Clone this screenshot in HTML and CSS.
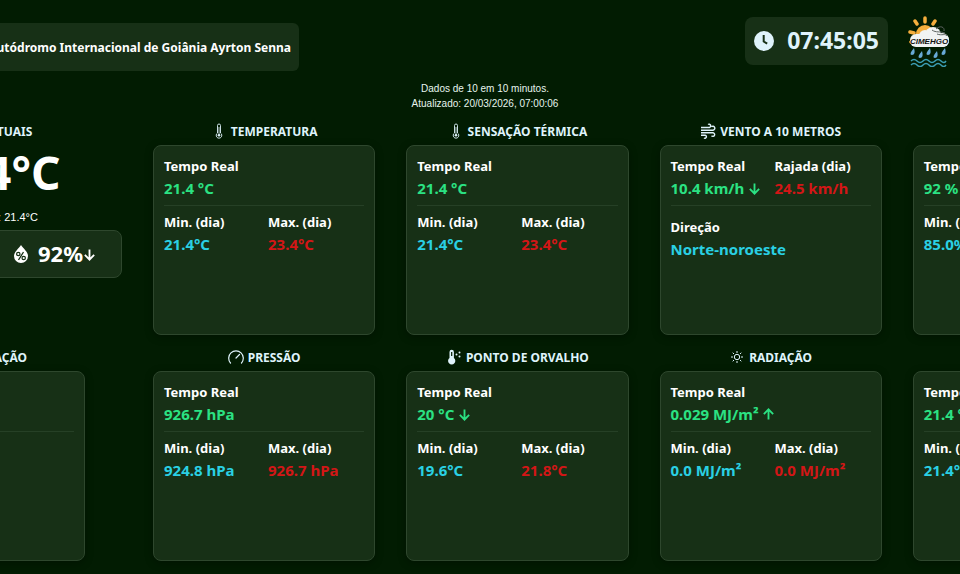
FILE: index.html
```html
<!DOCTYPE html>
<html lang="pt-BR">
<head>
    <meta charset="UTF-8">
    <meta name="viewport" content="width=device-width, initial-scale=1.0">
    <title>CIMEHGO - Autódromo Internacional de Goiânia</title>
    <link rel="stylesheet" href="styles.css">
</head>
<body>
    <!-- Shared icons -->
    <svg class="sprite" aria-hidden="true">
        <symbol id="icon-thermometer" viewBox="0 0 16 16">
            <path d="M6.500 10V2.500a1.500 1.500 0 0 1 3 0V10a2.800 2.800 0 1 1-3 0z" fill="none" stroke="currentColor" stroke-width="0.900"/>
            <path d="M8 4v8" stroke="currentColor" stroke-width="0.800"/>
            <circle cx="8" cy="12.300" r="1.300" fill="currentColor"/>
        </symbol>
        <symbol id="icon-down" viewBox="0 0 14 14">
            <path d="M7 1.500v11M2 7.500l5 5 5-5" fill="none" stroke="currentColor" stroke-width="2"/>
        </symbol>
        <symbol id="icon-up" viewBox="0 0 14 14">
            <path d="M7 12.500v-11M2 6.500l5-5 5 5" fill="none" stroke="currentColor" stroke-width="2"/>
        </symbol>
    </svg>

    <header class="header">
        <div class="station"><span>Autódromo Internacional de Goiânia Ayrton Senna</span></div>
        <div class="header-right">
            <div class="clock">
                <svg class="clock-icon" viewBox="0 0 20 20" aria-hidden="true">
                    <circle cx="10" cy="10" r="10" fill="currentColor"/>
                    <path d="M9.700 4v6.500l3.500 2.200" fill="none" stroke="#173016" stroke-width="2"/>
                </svg>
                <time>07:45:05</time>
            </div>
            <svg class="logo" viewBox="0 0 42 52" role="img" aria-label="CIMEHGO">
                <g stroke="#f5ae3d" stroke-width="3.500" stroke-linecap="round">
                    <path d="M17 3v4M7 6l2 3M27 6l-2 3M2 17l4 1M3 27l2-1"/>
                </g>
                <circle cx="17" cy="19" r="9" fill="#f5ae3d"/>
                <g fill="#f1f3f3">
                    <circle cx="17" cy="21" r="6"/>
                    <circle cx="25" cy="20" r="8"/>
                    <circle cx="34" cy="25" r="7"/>
                    <rect x="2" y="19" width="39" height="13" rx="6"/>
                </g>
                <path d="M24 15c4 3 8 1 13 3M28 14c4-4 9-2 8 2M29 19c5 2 8-1 10 2" fill="none" stroke="#5c6260"/>
                <text class="logo-text" x="21" y="29" text-anchor="middle">CIMEHGO</text>
                <path d="M6 33q-6 7-2 7t2-7zM14 36q-6 7-2 7t2-7zM22 33q-6 7-2 7t2-7zM29 36q-6 7-2 7t2-7zM37 33q-6 7-2 7t2-7z" fill="#68a9d6"/>
                <path d="M3 46q3-3 6 0t6 0 6 0 6 0 6 0 5 0M3 50q3-3 6 0t6 0 6 0 6 0 6 0 5 0" fill="none" stroke="#3c9db4" stroke-width="1.500"/>
            </svg>
        </div>
    </header>

    <p class="updated">Dados de 10 em 10 minutos.<br>Atualizado: 20/03/2026, 07:00:06</p>

    <main class="dashboard">
        <section class="current">
            <h2 class="title">CONDIÇÕES ATUAIS</h2>
            <div class="current-temp">
                <svg class="icon" aria-hidden="true"><use href="#icon-thermometer"/></svg>
                <span>21.4°C</span>
            </div>
            <p class="feels">Sensação térmica: 21.4°C</p>
            <div class="humidity">
                <svg class="drop" viewBox="0 0 14 18" aria-hidden="true">
                    <path d="M7 0c2 3 7 7 7 11a7 7 0 0 1-14 0c0-4 5-8 7-11z" fill="currentColor"/>
                    <path d="M9.500 7l-5 8" stroke="#173016" stroke-width="1.300"/>
                    <circle cx="4.300" cy="9" r="1.700" fill="none" stroke="#173016" stroke-width="1.200"/>
                    <circle cx="9.700" cy="13" r="1.700" fill="none" stroke="#173016" stroke-width="1.200"/>
                </svg>
                <span class="humidity-value">92%</span>
                <svg class="arrow" aria-label="caindo"><use href="#icon-down"/></svg>
            </div>
        </section>

        <section class="panel">
            <h2 class="title"><svg class="icon" aria-hidden="true"><use href="#icon-thermometer"/></svg>TEMPERATURA</h2>
            <div class="card">
                <dl class="row">
                    <div><dt>Tempo Real</dt><dd class="now">21.4 °C</dd></div>
                </dl>
                <dl class="row">
                    <div><dt>Min. (dia)</dt><dd class="min">21.4°C</dd></div>
                    <div><dt>Max. (dia)</dt><dd class="max">23.4°C</dd></div>
                </dl>
            </div>
        </section>

        <section class="panel">
            <h2 class="title"><svg class="icon" aria-hidden="true"><use href="#icon-thermometer"/></svg>SENSAÇÃO TÉRMICA</h2>
            <div class="card">
                <dl class="row">
                    <div><dt>Tempo Real</dt><dd class="now">21.4 °C</dd></div>
                </dl>
                <dl class="row">
                    <div><dt>Min. (dia)</dt><dd class="min">21.4°C</dd></div>
                    <div><dt>Max. (dia)</dt><dd class="max">23.4°C</dd></div>
                </dl>
            </div>
        </section>

        <section class="panel">
            <h2 class="title">
                <svg class="icon" viewBox="0 0 16 16" aria-hidden="true">
                    <path d="M1 4.500h8.500a1.700 1.700 0 1 0-1.500-3M1 7.200h12a2 2 0 1 0-1.500-3.500M1 9.800h12a1.800 1.800 0 1 1-1.500 3M1 12.300h4a1.500 1.500 0 1 1-1 2.700" fill="none" stroke="currentColor" stroke-width="1.400"/>
                </svg>VENTO A 10 METROS
            </h2>
            <div class="card">
                <dl class="row">
                    <div><dt>Tempo Real</dt><dd class="now">10.4 km/h <svg class="arrow" aria-label="caindo"><use href="#icon-down"/></svg></dd></div>
                    <div><dt>Rajada (dia)</dt><dd class="max">24.5 km/h</dd></div>
                </dl>
                <dl class="row row-wind">
                    <div><dt>Direção</dt><dd class="min">Norte-noroeste</dd></div>
                </dl>
            </div>
        </section>

        <section class="panel">
            <h2 class="title">UMIDADE</h2>
            <div class="card">
                <dl class="row">
                    <div><dt>Tempo Real</dt><dd class="now">92 %</dd></div>
                </dl>
                <dl class="row">
                    <div><dt>Min. (dia)</dt><dd class="min">85.0%</dd></div>
                    <div><dt>Max. (dia)</dt><dd class="max">92.0%</dd></div>
                </dl>
            </div>
        </section>

        <section class="panel panel-side">
            <h2 class="title">
                <svg class="icon" viewBox="0 0 16 16" aria-hidden="true">
                    <path d="M8 1c2 3 5 6 5 9a5 5 0 0 1-10 0c0-3 3-6 5-9z" fill="currentColor"/>
                </svg>PRECIPITAÇÃO
            </h2>
            <div class="card">
                <dl class="row">
                    <div><dt>Hoje</dt><dd class="now">0 mm</dd></div>
                </dl>
                <dl class="row">
                    <div><dt>Mês</dt><dd class="min">0 mm</dd></div>
                </dl>
            </div>
        </section>

        <section class="panel">
            <h2 class="title">
                <svg class="icon" viewBox="0 0 16 16" aria-hidden="true">
                    <path d="M2.500 14a7.300 7.300 0 1 1 11 0M8 9l3.500-3.500" fill="none" stroke="currentColor" stroke-width="1.200" stroke-linecap="round"/>
                </svg>PRESSÃO
            </h2>
            <div class="card">
                <dl class="row">
                    <div><dt>Tempo Real</dt><dd class="now">926.7 hPa</dd></div>
                </dl>
                <dl class="row">
                    <div><dt>Min. (dia)</dt><dd class="min">924.8 hPa</dd></div>
                    <div><dt>Max. (dia)</dt><dd class="max">926.7 hPa</dd></div>
                </dl>
            </div>
        </section>

        <section class="panel">
            <h2 class="title">
                <svg class="icon" viewBox="0 0 16 16" aria-hidden="true">
                    <path d="M3.500 9V3a2.200 2.200 0 0 1 4.400 0v6a3.600 3.600 0 1 1-4.400 0z" fill="currentColor"/>
                    <path d="M5.700 3v4" stroke="#021c02" stroke-width="1.200"/>
                    <g fill="currentColor">
                        <circle cx="10.500" cy="5.500" r="1"/>
                        <circle cx="13.500" cy="3.500" r="1"/>
                        <circle cx="13.500" cy="7.500" r="1"/>
                    </g>
                </svg>PONTO DE ORVALHO
            </h2>
            <div class="card">
                <dl class="row">
                    <div><dt>Tempo Real</dt><dd class="now">20 °C <svg class="arrow" aria-label="caindo"><use href="#icon-down"/></svg></dd></div>
                </dl>
                <dl class="row">
                    <div><dt>Min. (dia)</dt><dd class="min">19.6°C</dd></div>
                    <div><dt>Max. (dia)</dt><dd class="max">21.8°C</dd></div>
                </dl>
            </div>
        </section>

        <section class="panel">
            <h2 class="title">
                <svg class="icon" viewBox="0 0 16 16" aria-hidden="true">
                    <circle cx="8" cy="8" r="2.700" fill="none" stroke="currentColor"/>
                    <path d="M8 2v2M8 12v2M2 8h2M12 8h2M3.700 3.700l1.300 1.300M11 11l1.300 1.300M3.700 12.300l1.300-1.300M11 5l1.300-1.300" stroke="currentColor"/>
                </svg>RADIAÇÃO
            </h2>
            <div class="card">
                <dl class="row">
                    <div><dt>Tempo Real</dt><dd class="now">0.029 MJ/m² <svg class="arrow" aria-label="subindo"><use href="#icon-up"/></svg></dd></div>
                </dl>
                <dl class="row">
                    <div><dt>Min. (dia)</dt><dd class="min">0.0 MJ/m²</dd></div>
                    <div><dt>Max. (dia)</dt><dd class="max">0.0 MJ/m²</dd></div>
                </dl>
            </div>
        </section>

        <section class="panel">
            <h2 class="title">TEMP. SOLO</h2>
            <div class="card">
                <dl class="row">
                    <div><dt>Tempo Real</dt><dd class="now">21.4 °C</dd></div>
                </dl>
                <dl class="row">
                    <div><dt>Min. (dia)</dt><dd class="min">21.4°C</dd></div>
                    <div><dt>Max. (dia)</dt><dd class="max">23.4°C</dd></div>
                </dl>
            </div>
        </section>
    </main>
</body>
</html>
```
FILE: styles.css
```css
* {
    margin: 0;
    padding: 0;
    box-sizing: border-box;
}

body {
    font-family: "Noto Sans", sans-serif;
    background-color: #021c02;
    color: #fff;
    min-height: 100vh;
    overflow: hidden;
}

.sprite {
    display: none;
}

.header {
    display: flex;
    justify-content: space-between;
    align-items: flex-start;
    padding: 15px 10px 0 0;
}

.station {
    display: flex;
    justify-content: flex-end;
    align-items: center;
    width: 299px;
    height: 48px;
    margin-top: 8px;
    padding-right: 8px;
    border-radius: 0 6px 6px 0;
    background-color: #173016;
    font-size: 12px;
    font-weight: 700;
    white-space: nowrap;
    overflow: hidden;
}

.header-right {
    display: flex;
    align-items: center;
    gap: 20px;
}

.clock {
    display: flex;
    align-items: center;
    justify-content: space-between;
    width: 143px;
    height: 48px;
    padding: 0 9px;
    border-radius: 8px;
    background-color: #173016;
    color: #dff3fb;
    font-size: 23px;
    font-weight: 700;
    line-height: 30px;
}

.clock time {
    padding-bottom: 3px;
}

.clock-icon {
    width: 20px;
    height: 20px;
}

.logo {
    width: 42px;
    height: 52px;
}

.logo-text {
    font: italic bold 8px "Liberation Sans", sans-serif;
    fill: #111;
}

.updated {
    padding: 10px 0 0 10px;
    font-family: "Liberation Sans", sans-serif;
    font-size: 10px;
    line-height: 15px;
    text-align: center;
    color: #e6f5ee;
}

/* The board is wider than the window and bleeds off both sides */
.dashboard {
    display: grid;
    grid-template-columns: 296px repeat(4, 1fr);
    gap: 11px 31px;
    margin: 9px -175px 0 -174px;
}

.title {
    display: flex;
    justify-content: center;
    align-items: center;
    gap: 4px;
    height: 22px;
    font-size: 12px;
    font-weight: 700;
    color: #dff3fb;
    white-space: nowrap;
}

.icon {
    width: 16px;
    height: 16px;
}

.card {
    height: 190px;
    margin-top: 3px;
    padding: 9px 10px;
    border: 1px solid #2e472d;
    border-radius: 8px;
    background-color: #173016;
    box-shadow: 0 2px 8px rgba(0, 0, 0, 0.3);
}

.panel-side {
    padding: 0 37px;
}

.row {
    display: grid;
    grid-template-columns: 92px 92px;
    column-gap: 12px;
    padding-bottom: 6px;
    font-weight: 700;
    line-height: 22px;
    white-space: nowrap;
}

.row + .row {
    padding-top: 5px;
    border-top: 1px solid #264026;
}

.row + .row-wind {
    padding-top: 10px;
}

dt {
    font-size: 13px;
}

dd {
    height: 22px;
    font-size: 15px;
}

.now {
    color: #2be283;
}

.min {
    color: #2ad0e4;
}

.max {
    color: #d31616;
}

.arrow {
    width: 13px;
    height: 13px;
    vertical-align: -1px;
}

.current {
    text-align: center;
}

.current-temp {
    display: flex;
    justify-content: center;
    align-items: center;
    gap: 16px;
    height: 60px;
    font-size: 46px;
    font-weight: 700;
}

.feels {
    margin-top: 7px;
    font-family: "Liberation Sans", sans-serif;
    font-size: 11px;
    line-height: 16px;
}

.humidity {
    display: flex;
    justify-content: flex-end;
    align-items: center;
    height: 48px;
    margin-top: 5px;
    padding-right: 25px;
    border: 1px solid #2e472d;
    border-radius: 8px;
    background-color: #173016;
}

.drop {
    width: 14px;
    height: 18px;
    margin-right: 10px;
}

.humidity-value {
    font-size: 22px;
    font-weight: 700;
    line-height: 30px;
    padding-bottom: 3px;
}
```
